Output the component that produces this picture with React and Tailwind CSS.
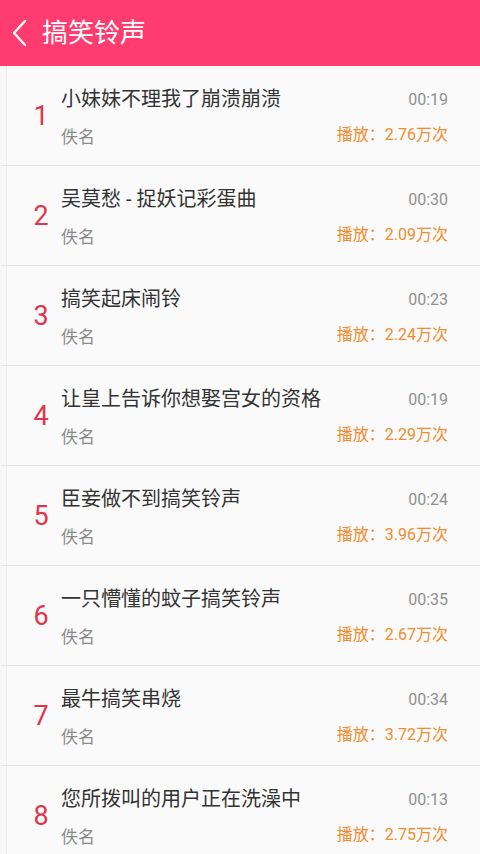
const songs = [
  { title: "小妹妹不理我了崩溃崩溃", time: "00:19", plays: "2.76" },
  { title: "吴莫愁 - 捉妖记彩蛋曲", time: "00:30", plays: "2.09" },
  { title: "搞笑起床闹铃", time: "00:23", plays: "2.24" },
  { title: "让皇上告诉你想娶宫女的资格", time: "00:19", plays: "2.29" },
  { title: "臣妾做不到搞笑铃声", time: "00:24", plays: "3.96" },
  { title: "一只懵懂的蚊子搞笑铃声", time: "00:35", plays: "2.67" },
  { title: "最牛搞笑串烧", time: "00:34", plays: "3.72" },
  { title: "您所拨叫的用户正在洗澡中", time: "00:13", plays: "2.75" },
];

export default function App() {
  return (
    <div
      className="h-[854px] w-[480px] overflow-hidden bg-[#f7f7f7]"
      style={{ fontFamily: 'Roboto, "Noto Sans CJK SC", sans-serif' }}
    >
      <header className="flex h-[66px] items-center bg-[#ff3c6f] text-white">
        <svg width="40" height="40" viewBox="0 0 40 40">
          <path d="M25 8 L14 20 L25 32" fill="none" stroke="white" strokeWidth="2.4" strokeLinecap="round" strokeLinejoin="round" />
        </svg>
        <h1 className="ml-[2px] text-[26px] leading-none">搞笑铃声</h1>
      </header>
      <ul className="ml-[6px] border-l border-[#ececec] bg-[#fafafa]">
        {songs.map((song, i) => (
          <li key={i} className="-ml-[6px] flex h-[100px] border-b border-[#e2e2e2] pl-[6px]">
            <div className="flex w-[54px] items-center justify-center pl-[14px] pt-[2px] text-[27px] text-[#e3344c]">
              {i + 1}
            </div>
            <div className="flex-1 pt-[18px]">
              <p className="text-[20px] leading-[30px] text-[#333]">{song.title}</p>
              <p className="mt-[11px] text-[17px] leading-[24px] text-[#8a8a8a]">佚名</p>
            </div>
            <div className="flex flex-col items-end pr-[32px] pt-[22px]">
              <span className="text-[16px] leading-[24px] text-[#909090]">{song.time}</span>
              <span className="mt-[11px] text-[16px] leading-[24px] text-[#f08c2d]">播放：{song.plays}万次</span>
            </div>
          </li>
        ))}
      </ul>
    </div>
  );
}
